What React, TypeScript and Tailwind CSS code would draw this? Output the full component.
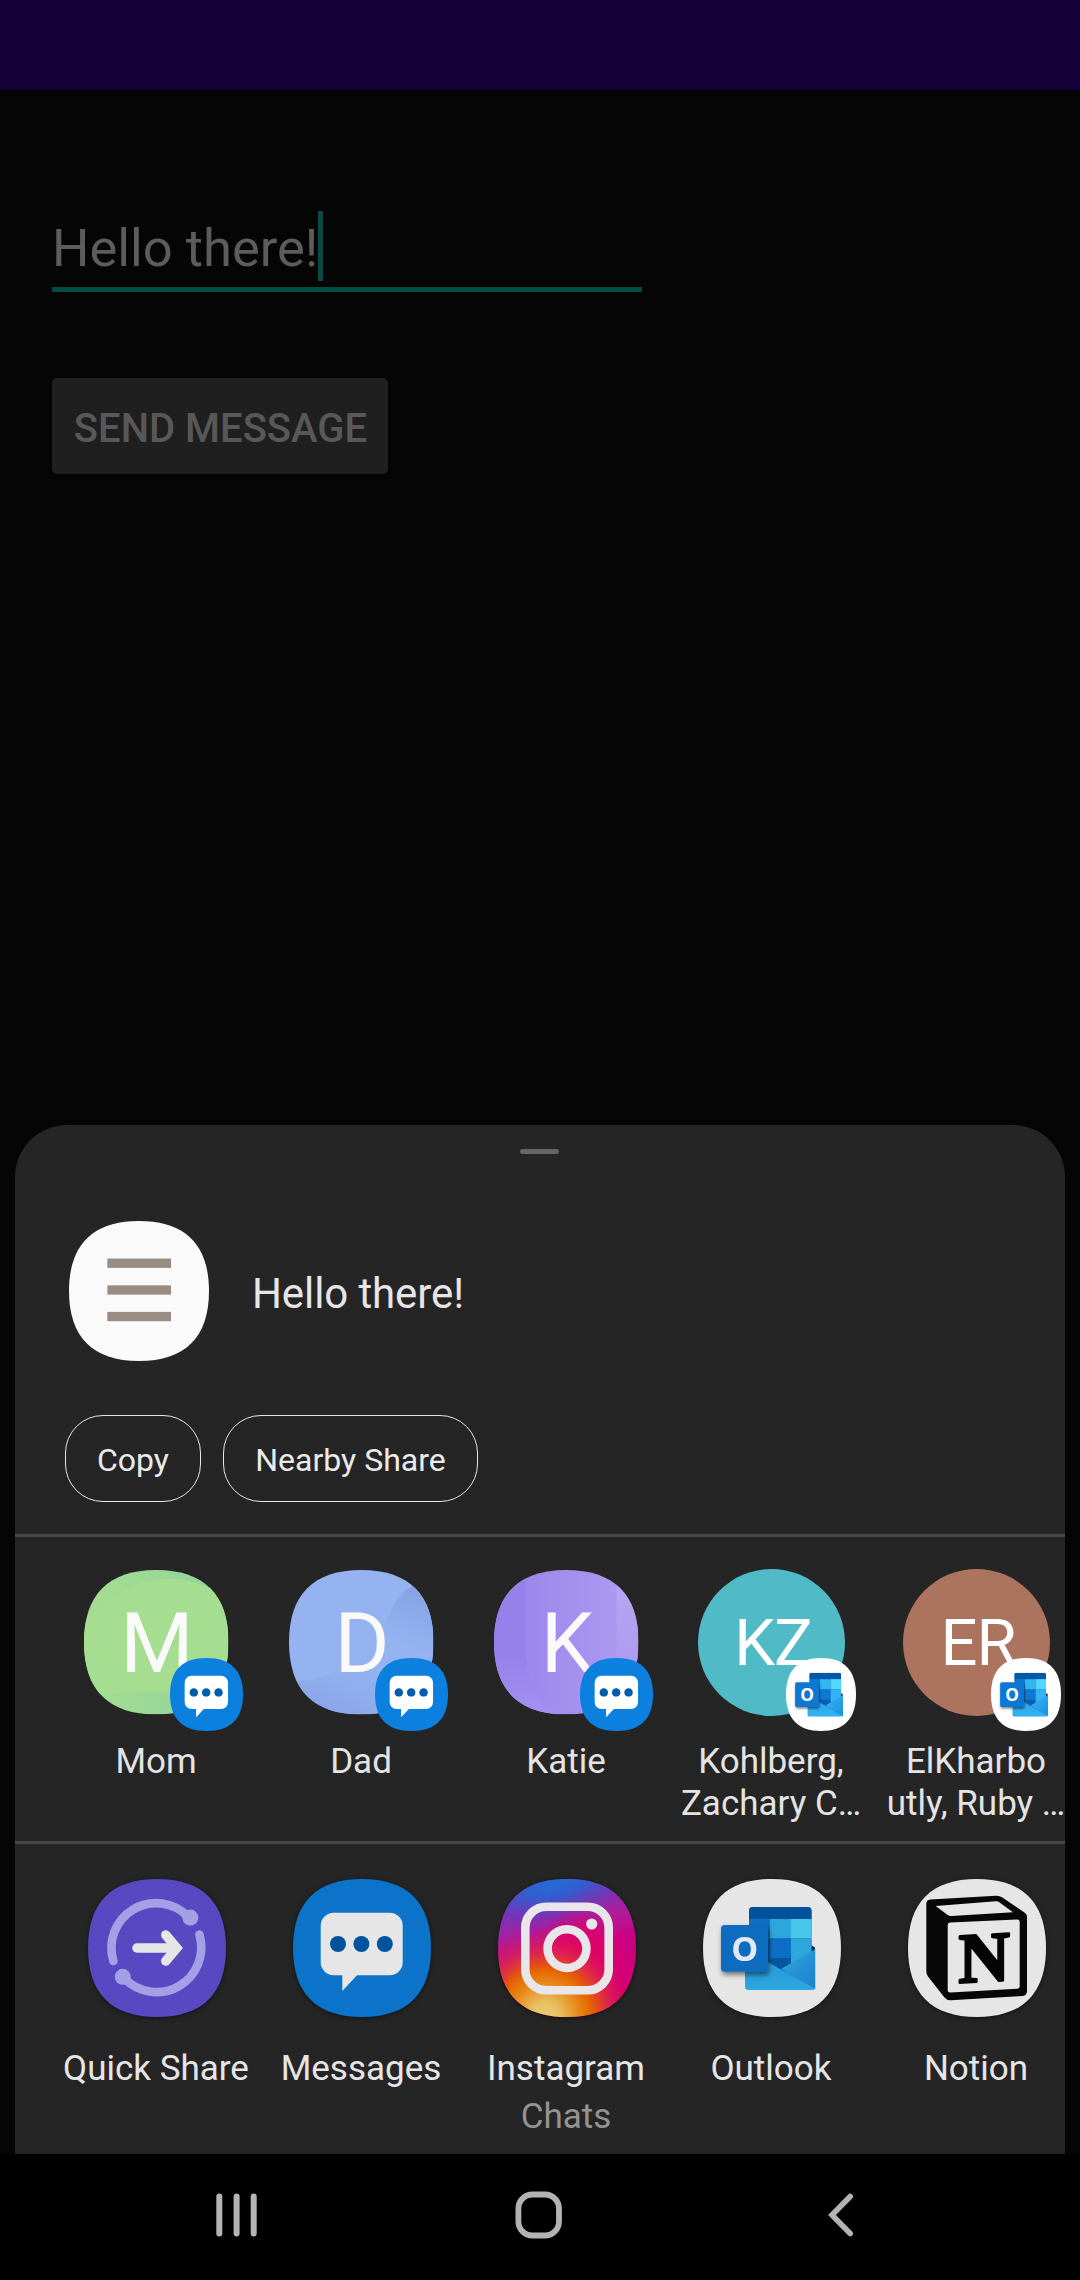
import React from "react";

const SQUIRCLE =
  "M50 0C83 0 100 17 100 50C100 83 83 100 50 100C17 100 0 83 0 50C0 17 17 0 50 0Z";

function Squircle({ fill }: { fill: string }) {
  return <path d={SQUIRCLE} transform="scale(1.38)" fill={fill} />;
}

function MessagesIcon({ className, dim }: { className: string; dim?: boolean }) {
  return (
    <svg viewBox="0 0 138 138" className={className}>
      <Squircle fill={dim ? "#0b73c9" : "#0c80df"} />
      <path
        d="M40.7 33.7H96.7A13 13 0 0 1 109.7 46.7V83.3A13 13 0 0 1 96.7 96.3H64L49.3 112V96.3H40.7A13 13 0 0 1 27.7 83.3V46.7A13 13 0 0 1 40.7 33.7Z"
        fill={dim ? "#e6e6e6" : "#ffffff"}
      />
      <g fill={dim ? "#00539c" : "#005cad"}>
        <circle cx="45" cy="65" r="8" />
        <circle cx="68.4" cy="65" r="8" />
        <circle cx="91.8" cy="65" r="8" />
      </g>
    </svg>
  );
}

function OutlookIcon({ className, dim, id }: { className: string; dim?: boolean; id: string }) {
  return (
    <svg viewBox="0 0 138 138" preserveAspectRatio="none" className={className}>
      <defs>
        <linearGradient id={`${id}-flap`} x1="0" y1="0" x2="1" y2="1">
          <stop offset="0" stopColor={dim ? "#30a8df" : "#36b8f5"} />
          <stop offset="1" stopColor={dim ? "#1a7fcc" : "#1c8ee0"} />
        </linearGradient>
        <linearGradient id={`${id}-front`} x1="0" y1="0" x2="0" y2="1">
          <stop offset="0" stopColor={dim ? "#2594d4" : "#28a0e8"} />
          <stop offset="1" stopColor={dim ? "#2da7df" : "#31b4f2"} />
        </linearGradient>
        <filter id={`${id}-shadow`} x="-30%" y="-30%" width="160%" height="160%">
          <feDropShadow dx="1" dy="3" stdDeviation="2.5" floodColor="#000000" floodOpacity="0.5" />
        </filter>
        <clipPath id={`${id}-doc`}>
          <rect x="46" y="28" width="62.5" height="80" rx="4" />
        </clipPath>
        <clipPath id={`${id}-env`}>
          <rect x="42" y="60" width="70.5" height="51" rx="3.5" />
        </clipPath>
      </defs>
      <Squircle fill={dim ? "#e6e6e6" : "#ffffff"} />
      <path d="M108 66l4 2.5v5l-4 4z" fill="#0b2f62" />
      <g clipPath={`url(#${id}-doc)`}>
        <rect x="46" y="28" width="63" height="80" fill={dim ? "#07569f" : "#0a5eb0"} />
        <rect x="46" y="28" width="63" height="12" fill={dim ? "#00539a" : "#0358a7"} />
        <rect x="46" y="40" width="21" height="19.5" fill={dim ? "#0c6fc5" : "#0f78d4"} />
        <rect x="67" y="40" width="21" height="19.5" fill={dim ? "#2da6dc" : "#32b5f0"} />
        <rect x="88" y="40" width="21" height="19.5" fill={dim ? "#49c7e8" : "#50d9ff"} />
        <rect x="67" y="59.5" width="21" height="19.5" fill={dim ? "#0c6fc5" : "#0f78d4"} />
        <rect x="88" y="59.5" width="21" height="26" fill={dim ? "#2da6dc" : "#32b5f0"} />
      </g>
      <g clipPath={`url(#${id}-env)`}>
        <path d="M78 90L112.5 70V111Z" fill={`url(#${id}-flap)`} />
        <path d="M42 70L112.5 110V111H42Z" fill={`url(#${id}-front)`} />
      </g>
      <rect
        x="18"
        y="46"
        width="47"
        height="46.7"
        rx="3.5"
        fill={dim ? "#0c6cc0" : "#0f78d4"}
        filter={`url(#${id}-shadow)`}
      />
      <text
        x="41.7"
        y="82"
        textAnchor="middle"
        fontFamily="'Open Sans', sans-serif"
        fontWeight="700"
        fontSize="34"
        textLength="27"
        lengthAdjust="spacingAndGlyphs"
        fill={dim ? "#dfe9ee" : "#ffffff"}
      >
        O
      </text>
    </svg>
  );
}

function QuickShareIcon() {
  return (
    <svg viewBox="0 0 138 138" className="size-[138px]">
      <Squircle fill="#5848c1" />
      <g fill="none" stroke="#a59fe6" strokeWidth="8.6" strokeLinecap="round">
        <path d="M25.4 82A44.7 44.7 0 0 1 100 37.5" />
        <path d="M111.4 55.5A44.7 44.7 0 0 1 36.5 99.5" />
      </g>
      <circle cx="102.3" cy="38.6" r="8" fill="#a59fe6" />
      <circle cx="34.7" cy="97.8" r="8" fill="#a59fe6" />
      <g fill="none" stroke="#e6e6e6" strokeWidth="9.4" strokeLinecap="round">
        <path d="M48.9 69H87" />
        <path d="M77.7 55.9L88.8 69L77.7 82.1" />
      </g>
    </svg>
  );
}

function InstagramIcon() {
  return (
    <svg viewBox="0 0 138 138" className="size-[138px]">
      <defs>
        <linearGradient id="ig-base" x1="0.35" y1="0" x2="0.65" y2="1">
          <stop offset="0" stopColor="#6a3cc0" />
          <stop offset="0.2" stopColor="#8c2ab0" />
          <stop offset="0.38" stopColor="#b01c98" />
          <stop offset="0.55" stopColor="#cb0084" />
          <stop offset="1" stopColor="#d6006c" />
        </linearGradient>
        <radialGradient
          id="ig-blue"
          gradientUnits="userSpaceOnUse"
          cx="0"
          cy="0"
          r="1"
          gradientTransform="translate(42 0) rotate(-14) scale(74 35)"
        >
          <stop offset="0" stopColor="#1f6fda" />
          <stop offset="0.35" stopColor="#2c62d0" stopOpacity="0.9" />
          <stop offset="1" stopColor="#6a34b8" stopOpacity="0" />
        </radialGradient>
        <radialGradient id="ig-warm" cx="0.34" cy="1" r="0.66">
          <stop offset="0" stopColor="#e8cd78" />
          <stop offset="0.16" stopColor="#e8c062" />
          <stop offset="0.36" stopColor="#e88c1c" />
          <stop offset="0.52" stopColor="#e66200" />
          <stop offset="0.72" stopColor="#e02a48" stopOpacity="0.8" />
          <stop offset="1" stopColor="#dc0064" stopOpacity="0" />
        </radialGradient>
        <radialGradient id="ig-pink" cx="0.6" cy="0.55" r="0.35">
          <stop offset="0" stopColor="#e2005f" />
          <stop offset="0.5" stopColor="#e0006a" stopOpacity="0.8" />
          <stop offset="1" stopColor="#e0006a" stopOpacity="0" />
        </radialGradient>
      </defs>
      <Squircle fill="url(#ig-base)" />
      <Squircle fill="url(#ig-blue)" />
      <Squircle fill="url(#ig-pink)" />
      <Squircle fill="url(#ig-warm)" />
      <g fill="none" stroke="#e8e6e8">
        <rect x="27.3" y="27.7" width="83.4" height="83.6" rx="21" strokeWidth="8.6" />
        <circle cx="69" cy="69.6" r="19.4" strokeWidth="8.6" />
      </g>
      <circle cx="93.7" cy="45" r="5.6" fill="#e8e6e8" />
    </svg>
  );
}

function NotionIcon() {
  return (
    <svg viewBox="0 0 138 138" className="size-[138px]">
      <Squircle fill="#e6e6e6" />
      <path
        d="M22.5 20.6L88 16.7Q91.5 16.5 94 18.2L116.5 33.4Q119 35 119 38.5V112Q119 116.5 114.5 117L43 121.2Q39 121.4 36.5 118.4L20 97.5Q18.3 95.5 18.3 92V25Q18.3 21 22.5 20.6Z"
        fill="#070707"
      />
      <path d="M27.7 26.9L88 22.3Q90 22.2 91.6 23.4L105 33.2L43.5 36.9Q41 37 39 35.4Z" fill="#e6e6e6" />
      <path
        d="M42.5 43.5L109 40.6Q111.7 40.5 111.7 43V107Q111.7 109.6 109 109.8L42.5 113.5Q39.7 113.6 39.7 111V46.5Q39.7 43.7 42.5 43.5Z"
        fill="#e6e6e6"
      />
      <text
        x="0"
        y="0"
        transform="translate(76 102.3) skewY(-3)"
        textAnchor="middle"
        fontFamily="'Liberation Serif', serif"
        fontWeight="700"
        fontSize="71"
        fill="#040404"
        stroke="#040404"
        strokeWidth="2.6"
        strokeLinejoin="round"
      >
        N
      </text>
    </svg>
  );
}

const AVATAR_BOX = "absolute left-[31px] top-[1px] size-[144.5px]";

function MomAvatar() {
  return (
    <svg viewBox="0 0 138 138" className={AVATAR_BOX}>
      <defs>
        <linearGradient id="mom-bg">
          <stop offset="0.1" stopColor="#a4dd90" />
          <stop offset="1" stopColor="#8ed3a2" />
        </linearGradient>
        <clipPath id="mom-clip">
          <path d={SQUIRCLE} transform="scale(1.38)" />
        </clipPath>
      </defs>
      <g clipPath="url(#mom-clip)">
        <rect width="138" height="138" fill="url(#mom-bg)" />
        <path d="M0 50C45 5 85 -5 138 26V124C90 112 50 118 0 119Z" fill="#a5dd91" />
      </g>
    </svg>
  );
}

function DadAvatar() {
  return (
    <svg viewBox="0 0 138 138" className={AVATAR_BOX}>
      <defs>
        <linearGradient id="dad-right" gradientUnits="userSpaceOnUse" x1="125" y1="20" x2="105" y2="72">
          <stop offset="0" stopColor="#86a4e4" />
          <stop offset="1" stopColor="#95b3f1" />
        </linearGradient>
        <linearGradient id="dad-low" gradientUnits="userSpaceOnUse" x1="50" y1="138" x2="74" y2="86">
          <stop offset="0" stopColor="#8ba7e9" />
          <stop offset="1" stopColor="#95b3f1" />
        </linearGradient>
        <clipPath id="dad-clip">
          <path d={SQUIRCLE} transform="scale(1.38)" />
        </clipPath>
      </defs>
      <g clipPath="url(#dad-clip)">
        <rect width="138" height="138" fill="#95b3f1" />
        <path d="M0 106C40 106 75 90 90 60L138 84V138H0Z" fill="url(#dad-low)" />
        <path d="M90 58C98 36 104 18 124 14L138 14V84L84 76Z" fill="url(#dad-right)" />
      </g>
    </svg>
  );
}

function KatieAvatar() {
  return (
    <svg viewBox="0 0 138 138" className={AVATAR_BOX}>
      <defs>
        <linearGradient id="katie-bg">
          <stop offset="0.2" stopColor="#9c87ec" />
          <stop offset="1" stopColor="#ae9df2" />
        </linearGradient>
        <linearGradient id="katie-left" x1="0" y1="0" x2="0" y2="1">
          <stop offset="0.6" stopColor="#9681ea" />
          <stop offset="1" stopColor="#a590f2" />
        </linearGradient>
        <linearGradient id="katie-right" x1="0" y1="0" x2="0" y2="1">
          <stop offset="0" stopColor="#b8a8f2" />
          <stop offset="0.6" stopColor="#ad9cf0" />
        </linearGradient>
        <clipPath id="katie-clip">
          <path d={SQUIRCLE} transform="scale(1.38)" />
        </clipPath>
      </defs>
      <g clipPath="url(#katie-clip)">
        <rect width="138" height="138" fill="url(#katie-bg)" />
        <path d="M0 0H30V75C30 105 42 122 60 138H0Z" fill="url(#katie-left)" />
        <rect x="117" width="21" height="138" fill="url(#katie-right)" />
      </g>
    </svg>
  );
}

type Contact = {
  initials: string;
  lines: string[];
  avatar: React.ReactNode;
  outlook?: boolean;
};

const contacts: Contact[] = [
  { initials: "M", lines: ["Mom"], avatar: <MomAvatar /> },
  { initials: "D", lines: ["Dad"], avatar: <DadAvatar /> },
  { initials: "K", lines: ["Katie"], avatar: <KatieAvatar /> },
  {
    initials: "KZ",
    lines: ["Kohlberg,", "Zachary C…"],
    avatar: <div className="absolute left-[30px] top-0 size-[147px] rounded-full bg-[#50bac6]" />,
    outlook: true,
  },
  {
    initials: "ER",
    lines: ["ElKharbo", "utly, Ruby …"],
    avatar: <div className="absolute left-[30px] top-0 size-[147px] rounded-full bg-[#ac735e]" />,
    outlook: true,
  },
];

const apps = [
  { name: "Quick Share", icon: <QuickShareIcon /> },
  { name: "Messages", icon: <MessagesIcon className="size-[138px]" dim /> },
  { name: "Instagram", note: "Chats", icon: <InstagramIcon /> },
  { name: "Outlook", icon: <OutlookIcon className="size-[138px]" dim id="app-ol" /> },
  { name: "Notion", icon: <NotionIcon /> },
];

function ContactTile({ contact }: { contact: Contact }) {
  return (
    <div className="flex w-[205px] shrink-0 flex-col items-center">
      <div className="relative flex h-[147px] w-full items-center justify-center pt-[2px]">
        {contact.avatar}
        {contact.outlook ? (
          <span className="relative pl-[5px] text-[65px] leading-none tracking-[-1px] text-white">
            {contact.initials}
          </span>
        ) : (
          <span className="relative pl-[3px] text-[84px] leading-none text-[#fafafa]">{contact.initials}</span>
        )}
        {contact.outlook ? (
          <OutlookIcon className="absolute left-[118px] top-[89px] h-[73px] w-[70px]" id={`badge-${contact.initials}`} />
        ) : (
          <MessagesIcon className="absolute left-[117px] top-[89px] size-[73px]" />
        )}
      </div>
      <div className="mt-[25px] pl-[1px] text-center text-[35px] leading-[42px] whitespace-nowrap text-[#e4e4e4]">
        {contact.lines.map((line) => (
          <div key={line}>{line}</div>
        ))}
      </div>
    </div>
  );
}

export default function App() {
  return (
    <div className="flex h-[2280px] w-[1080px] flex-col overflow-hidden bg-[#050505] font-['Roboto',sans-serif]">
      <header className="h-[90px] shrink-0 bg-[#140039]" />

      <main className="flex h-[1035px] shrink-0 flex-col items-start pl-[52px] pt-[121px]">
        <div className="flex h-[81px] w-[590px] items-start border-b-[5px] border-[#034b43]">
          <span className="text-[52.5px] leading-[74px] text-[#5c5c5c]">Hello there!</span>
          <span className="h-[70px] w-[5px] bg-[#0a4a44]" />
        </div>
        <button className="mt-[86px] flex h-[96px] w-[336px] items-center justify-center rounded-[5px] bg-[#1f1f1f] pl-[1px] pt-[6px] text-[40px] font-medium whitespace-nowrap text-[#585858]">
          SEND MESSAGE
        </button>
      </main>

      <section className="mx-[15px] flex h-[1029px] shrink-0 flex-col overflow-hidden rounded-t-[52px] bg-[#252525]">
        <div className="ml-[505px] mt-[24px] h-[5px] w-[39px] shrink-0 rounded-full bg-[#666666]" />
        <div className="mt-[67px] flex h-[140px] shrink-0 items-center pl-[54px]">
          <svg viewBox="0 0 138 138" className="size-[140px]">
            <Squircle fill="#fafafa" />
            <g fill="#998c82">
              <rect x="37.8" y="37" width="62.8" height="9.2" />
              <rect x="37.8" y="63.4" width="62.8" height="9.2" />
              <rect x="37.8" y="89.6" width="62.8" height="9.2" />
            </g>
          </svg>
          <span className="ml-[43px] pt-[4px] text-[42px] tracking-[-0.1px] text-[#e6e6e6]">Hello there!</span>
        </div>
        <div className="mt-[54px] flex h-[87px] shrink-0 gap-[22px] pl-[50px] text-[32px] text-[#ebebeb]">
          <button className="w-[136px] rounded-[38px] border border-[#e6e6e6] pt-[3px]">Copy</button>
          <button className="w-[255px] rounded-[38px] border border-[#e6e6e6] pt-[3px]">Nearby Share</button>
        </div>
        <div className="mt-[32px] h-[3px] shrink-0 bg-[#484848]" />
        <div className="flex h-[304px] shrink-0 pl-[38px] pt-[32px]">
          {contacts.map((c) => (
            <ContactTile key={c.initials} contact={c} />
          ))}
        </div>
        <div className="h-[3px] shrink-0 bg-[#484848]" />
        <div className="flex pl-[38px] pt-[35px]">
          {apps.map((app) => (
            <div key={app.name} className="flex w-[205px] shrink-0 flex-col items-center">
              <div className="ml-[2px] drop-shadow-[0_1px_2px_rgba(0,0,0,0.5)]">{app.icon}</div>
              <div className="mt-[31px] pl-[1px] text-[35px] leading-[42px] whitespace-nowrap text-[#e6e6e6]">
                {app.name}
              </div>
              {app.note && (
                <div className="mt-[6px] pl-[1px] text-[35px] leading-[42px] text-[#939393]">{app.note}</div>
              )}
            </div>
          ))}
        </div>
      </section>

      <nav className="flex h-[126px] shrink-0 items-center bg-black pb-[4px]">
        <svg viewBox="0 0 42 48" className="ml-[216px] h-[48px] w-[42px]" fill="#b3b3b3">
          <rect x="0.3" y="2.5" width="6" height="43" rx="3" />
          <rect x="17.6" y="2.5" width="6" height="43" rx="3" />
          <rect x="34.7" y="2.5" width="6" height="43" rx="3" />
        </svg>
        <svg viewBox="0 0 48 48" className="ml-[257px] size-[48px]" fill="none" stroke="#b3b3b3" strokeWidth="5.8">
          <rect x="3.4" y="3.5" width="40.6" height="41" rx="14" />
        </svg>
        <svg
          viewBox="0 0 30 48"
          className="ml-[263px] h-[48px] w-[30px]"
          fill="none"
          stroke="#b3b3b3"
          strokeWidth="5.6"
          strokeLinecap="round"
        >
          <path d="M24.2 5.5L6 24L24.2 42.5" />
        </svg>
      </nav>
    </div>
  );
}
